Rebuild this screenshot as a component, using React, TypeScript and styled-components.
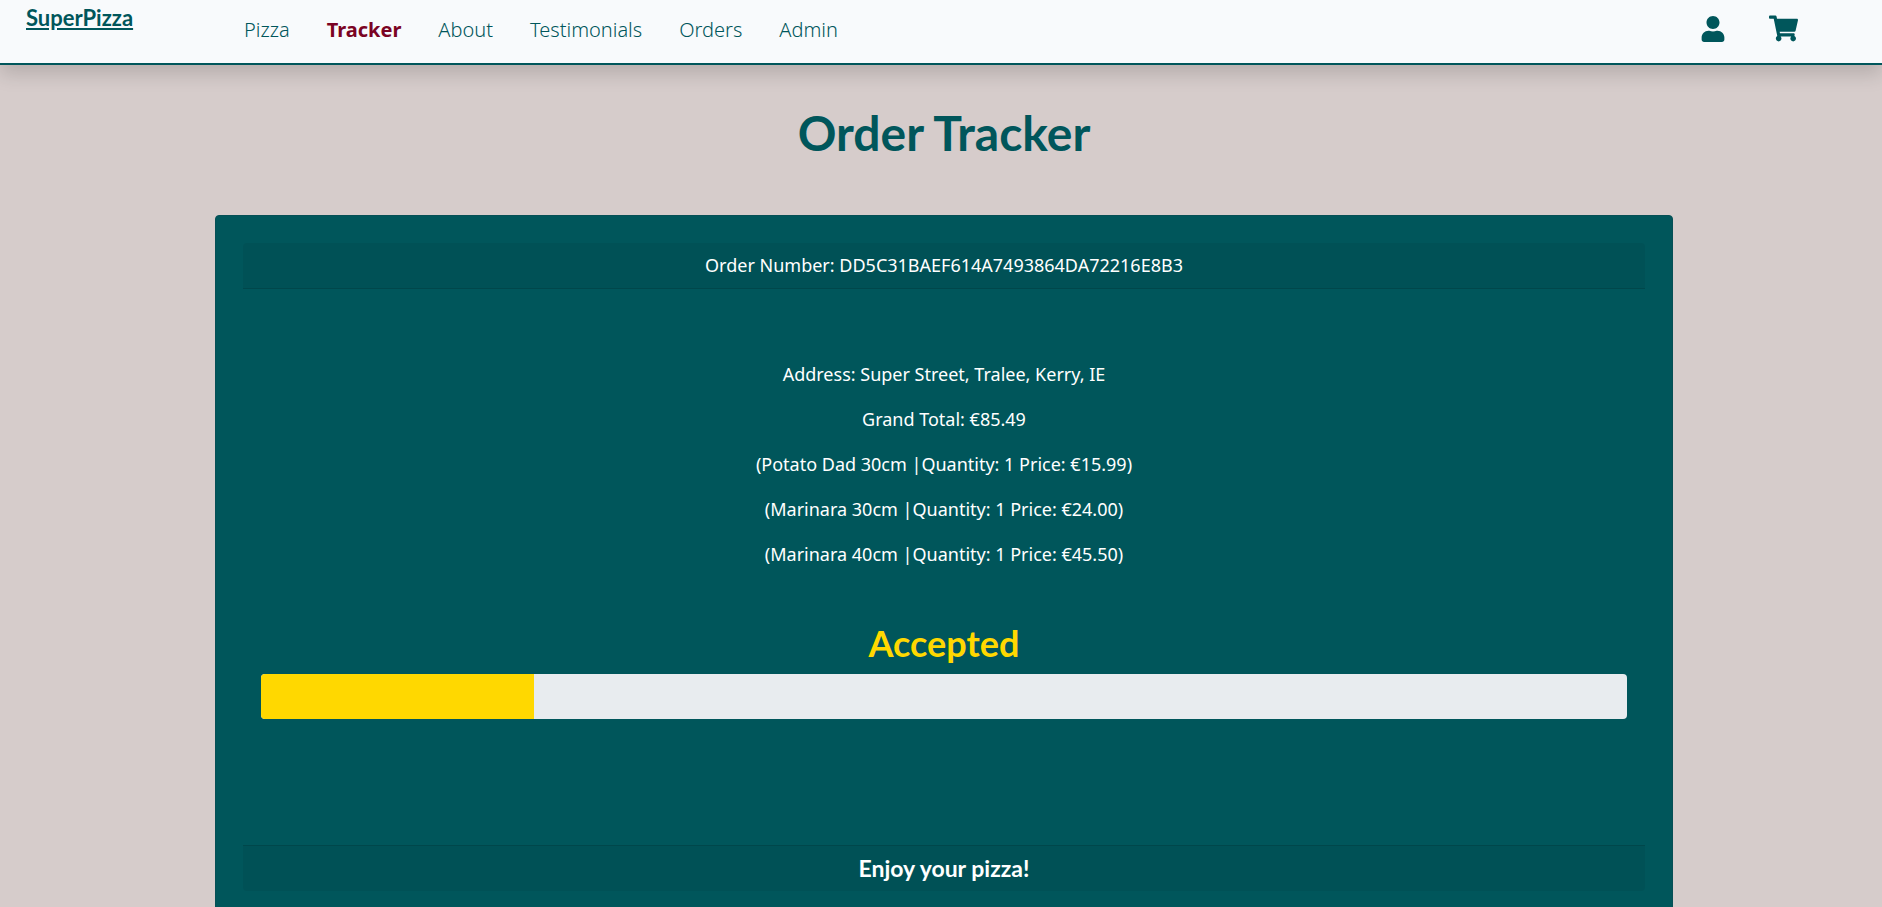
import React from "react";
import styled, { createGlobalStyle } from "styled-components";
import { FaShoppingCart, FaUser } from "react-icons/fa";

const teal = "#00565b";
const display = `Lato, "Open Sans", sans-serif`;

const GlobalStyle = createGlobalStyle`
  *, *::before, *::after { box-sizing: border-box; }
  body {
    margin: 0;
    background: #d6cccb;
    color: #fff;
    font: 400 18px/27px "Noto Sans", "Open Sans", sans-serif;
  }
`;

const Navbar = styled.header`
  position: relative;
  display: flex;
  align-items: center;
  height: 65px;
  padding: 0 84px 4px 26px;
  background: #f8fafc;
  border-bottom: 2px solid ${teal};
  box-shadow: 0 9px 18px rgba(0, 0, 0, 0.15);
`;

const Brand = styled.a`
  align-self: flex-start;
  width: 218px;
  color: ${teal};
  font: 700 22px/36px ${display};
  text-decoration: underline;
`;

const NavLinks = styled.nav`
  display: flex;
  flex: 1;
  gap: 37px;
`;

const NavLink = styled.a<{ $active?: boolean }>`
  color: ${({ $active }) => ($active ? "#7b0323" : teal)};
  font-size: 20px;
  line-height: 30px;
  font-weight: ${({ $active }) => ($active ? 700 : 300)};
  text-decoration: none;
`;

const IconLinks = styled.div`
  display: flex;
  align-items: center;
  gap: 43px;
  padding-bottom: 2px;
`;

const IconLink = styled.a<{ $size: number }>`
  display: flex;
  color: ${teal};
  font-size: ${({ $size }) => $size}px;
`;

const Main = styled.main`
  padding: 38px 209px 36px 215px;
`;

const Title = styled.h1`
  margin: 0 0 52px;
  color: ${teal};
  font: 700 48px/60px ${display};
  text-align: center;
`;

const Card = styled.section`
  padding: 27px;
  background: ${teal};
  border: 1px solid #064f55;
  border-radius: 4px;
  text-align: center;
`;

const CardHeader = styled.header`
  padding: 9px 18px;
  background: rgba(0, 0, 0, 0.05);
  border-bottom: 1px solid rgba(0, 0, 0, 0.13);
  border-radius: 4px 4px 0 0;
`;

const CardFooter = styled.footer`
  padding: 9px 18px;
  background: rgba(0, 0, 0, 0.05);
  border-top: 1px solid rgba(0, 0, 0, 0.13);
  border-radius: 0 0 4px 4px;
  font: 700 23px/27px ${display};
`;

const CardBody = styled.div`
  padding: 72px 18px 126px;
`;

const Line = styled.p`
  margin: 0 0 18px;
`;

const Status = styled.h2`
  margin: 54px 0 9px;
  color: #ffd800;
  font: 700 36px/43px ${display};
`;

const Progress = styled.div`
  height: 45px;
  overflow: hidden;
  background: #e8ecef;
  border-radius: 4px;
`;

const ProgressBar = styled.div`
  height: 100%;
  background: #ffd800;
`;

const links = ["Pizza", "Tracker", "About", "Testimonials", "Orders", "Admin"];

const details = [
  "Address: Super Street, Tralee, Kerry, IE",
  "Grand Total: €85.49",
  "(Potato Dad 30cm |Quantity: 1 Price: €15.99)",
  "(Marinara 30cm |Quantity: 1 Price: €24.00)",
  "(Marinara 40cm |Quantity: 1 Price: €45.50)",
];

export default function App() {
  const progress = 20;
  return (
    <>
      <GlobalStyle />
      <Navbar>
        <Brand href="#">SuperPizza</Brand>
        <NavLinks>
          {links.map((name) => (
            <NavLink
              key={name}
              href="#"
              $active={name === "Tracker"}
              aria-current={name === "Tracker" ? "page" : undefined}
            >
              {name}
            </NavLink>
          ))}
        </NavLinks>
        <IconLinks>
          <IconLink href="#" aria-label="Account" $size={26}>
            <FaUser />
          </IconLink>
          <IconLink href="#" aria-label="Cart" $size={29}>
            <FaShoppingCart />
          </IconLink>
        </IconLinks>
      </Navbar>
      <Main>
        <Title>Order Tracker</Title>
        <Card>
          <CardHeader>Order Number: DD5C31BAEF614A7493864DA72216E8B3</CardHeader>
          <CardBody>
            {details.map((text) => (
              <Line key={text}>{text}</Line>
            ))}
            <Status>Accepted</Status>
            <Progress
              role="progressbar"
              aria-label="Order progress"
              aria-valuenow={progress}
              aria-valuemin={0}
              aria-valuemax={100}
            >
              <ProgressBar style={{ width: `${progress}%` }} />
            </Progress>
          </CardBody>
          <CardFooter>Enjoy your pizza!</CardFooter>
        </Card>
      </Main>
    </>
  );
}
